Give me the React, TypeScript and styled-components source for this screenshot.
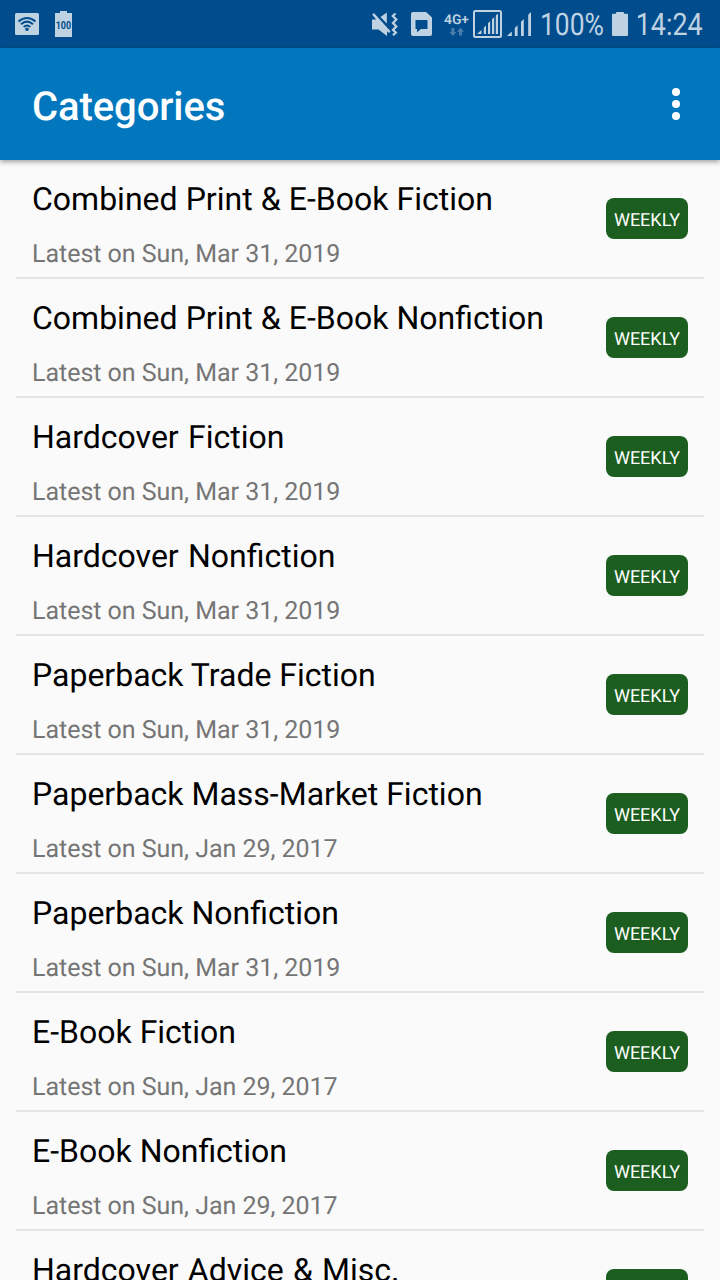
import React from 'react';
import styled, { createGlobalStyle } from 'styled-components';

const GlobalStyle = createGlobalStyle`
  * { box-sizing: border-box; }
  html, body { margin: 0; padding: 0; background: #fafafa; }
  body {
    font-family: Roboto, "Liberation Sans", sans-serif;
    text-rendering: geometricPrecision;
    overflow: hidden;
  }
`;

const Screen = styled.div`
  display: flex;
  flex-direction: column;
  width: 720px;
  height: 1280px;
  overflow: hidden;
  background: #fafafa;
`;

const StatusBar = styled.div`
  display: flex;
  justify-content: space-between;
  flex: none;
  height: 48px;
  padding: 0 16px 0 14px;
  background: #004c8c;
`;

const StatusGroup = styled.div`
  display: flex;
  height: 48px;
`;

const StatusIcon = styled.svg<{ $gap?: number }>`
  display: block;
  flex: none;
  height: 48px;
  margin-left: ${({ $gap = 0 }) => $gap}px;
  overflow: visible;
  fill: #bfd2e2;
  font-family: Roboto, sans-serif;
`;

const AppBar = styled.header`
  position: relative;
  display: flex;
  align-items: center;
  justify-content: space-between;
  flex: none;
  height: 112px;
  padding: 0 32px;
  background: #0277bd;
  box-shadow: 0 2px 5px rgba(0, 0, 0, 0.36);
`;

const Title = styled.h1`
  margin: 6px 0 0;
  font-size: 40px;
  line-height: 48px;
  font-weight: 500;
  letter-spacing: -0.08px;
  color: #fff;
`;

const MenuButton = styled.button`
  display: flex;
  flex-direction: column;
  gap: 4px;
  margin: 0 8px 0 0;
  padding: 0;
  border: 0;
  background: none;
`;

const Dot = styled.span`
  width: 8px;
  height: 8px;
  border-radius: 50%;
  background: #fff;
`;

const List = styled.ul`
  flex: none;
  margin: 0 16px;
  padding: 0;
  list-style: none;
`;

const Row = styled.li`
  display: flex;
  align-items: center;
  justify-content: space-between;
  height: 119px;
  padding: 0 16px;
  border-bottom: 2px solid #e4e4e4;
`;

const RowText = styled.div`
  display: flex;
  flex-direction: column;
  gap: 22px;
  height: 117px;
  padding-top: 20px;
  white-space: nowrap;
`;

const Name = styled.div<{ $wordGap?: number }>`
  font-size: 32px;
  line-height: 38px;
  word-spacing: ${({ $wordGap = 0 }) => $wordGap}px;
  color: #000;
`;

const Latest = styled.div`
  font-size: 25px;
  line-height: 30px;
  letter-spacing: -0.03px;
  color: #757575;
`;

const Badge = styled.span`
  display: flex;
  align-items: center;
  justify-content: center;
  width: 82px;
  height: 41px;
  padding-top: 4px;
  border-radius: 8px;
  background: #1b5e20;
  color: #fff;
  font-size: 18px;
  line-height: 21px;
`;

interface Category {
  name: string;
  latest: string;
  wordGap?: number;
}

const categories: Category[] = [
  { name: 'Combined Print & E-Book Fiction', latest: 'Sun, Mar 31, 2019', wordGap: 0.15 },
  { name: 'Combined Print & E-Book Nonfiction', latest: 'Sun, Mar 31, 2019', wordGap: 0.15 },
  { name: 'Hardcover Fiction', latest: 'Sun, Mar 31, 2019', wordGap: 1.3 },
  { name: 'Hardcover Nonfiction', latest: 'Sun, Mar 31, 2019', wordGap: 1.3 },
  { name: 'Paperback Trade Fiction', latest: 'Sun, Mar 31, 2019' },
  { name: 'Paperback Mass-Market Fiction', latest: 'Sun, Jan 29, 2017' },
  { name: 'Paperback Nonfiction', latest: 'Sun, Mar 31, 2019' },
  { name: 'E-Book Fiction', latest: 'Sun, Jan 29, 2017' },
  { name: 'E-Book Nonfiction', latest: 'Sun, Jan 29, 2017' },
  { name: 'Hardcover Advice & Misc.', latest: 'Sun, Mar 31, 2019', wordGap: 1.2 },
];

const WifiIcon = () => (
  <StatusIcon width="26" viewBox="0 0 26 48">
    <rect x="1" y="13" width="24" height="22" rx="1.5" />
    <g fill="none" stroke="#004c8c" strokeWidth="2">
      <path d="M4.5 21.5Q13 14.5 21.5 21.5" />
      <path d="M7 24.3Q13 19 19 24.3" />
      <path d="M9.7 27Q13 24 16.3 27" />
    </g>
    <circle cx="13" cy="29.2" r="1.7" fill="#004c8c" />
  </StatusIcon>
);

const BatteryLevelIcon = () => (
  <StatusIcon width="18" viewBox="0 0 18 48" $gap={14}>
    <path d="M1 13H6V11H13V13H18V37H1Z" />
    <text x="1.7" y="29.2" fontSize="11" fontWeight="700" fill="#004c8c" textLength="15.4" lengthAdjust="spacingAndGlyphs">100</text>
  </StatusIcon>
);

const MuteIcon = () => (
  <StatusIcon width="28" viewBox="0 0 28 48">
    <path d="M1 19.5H5.2L1.2 14.8L2.9 13L19.5 31.3L18 33L16 31.3V36L7.5 29.5H1Z" />
    <path d="M9.5 17L15.8 12.5V23.5Z" />
    <path d="M24.5 13.5L21.8 16L25.3 19.5L22 23L25.3 26.5L22 30L24.8 32.5L22 35.3" fill="none" stroke="#bfd2e2" strokeWidth="2.3" />
  </StatusIcon>
);

const CardIcon = () => (
  <StatusIcon width="22" viewBox="0 0 22 48" $gap={12}>
    <path fillRule="evenodd" d="M2 12H15L21 17.5V34Q21 36 19 36H2Q0 36 0 34V14Q0 12 2 12ZM4.5 20V29H6V32.3L10 29H16.5V20Z" />
  </StatusIcon>
);

const NetworkIcon = () => (
  <StatusIcon width="26" viewBox="0 0 26 48" $gap={11}>
    <text x="0" y="23.5" fontSize="13.5" fontWeight="600" textLength="25" lengthAdjust="spacingAndGlyphs">4G+</text>
    <path d="M7.5 28H10.3V32H12.3L8.9 36L5.5 32H7.5ZM15.1 35.5H17.9V31.7H20L16.5 27.5L13 31.7H15.1Z" fill="#4c80ad" />
  </StatusIcon>
);

const BoxedSignalIcon = () => (
  <StatusIcon width="30" viewBox="0 0 30 48" $gap={3}>
    <rect x="1" y="11" width="27" height="26" rx="1.5" fill="none" stroke="#bfd2e2" strokeWidth="2" />
    <path d="M4 34L8.5 30V34ZM10.8 34V27.8L13 25.5V34ZM15 34V23.2L17.2 21V34ZM19 34V19.2L21.2 17V34ZM22.8 34V15.5L25 13.5V34Z" />
  </StatusIcon>
);

const SignalIcon = () => (
  <StatusIcon width="25" viewBox="0 0 25 48" $gap={4}>
    <path d="M0 36L4.8 31.4V36ZM7.8 36V28L10.6 25.2V36ZM14 36V21.8L16.8 19V36ZM21.2 36V14.8L24 12V36Z" />
  </StatusIcon>
);

const BatteryIcon = () => (
  <StatusIcon width="17" viewBox="0 0 17 48" $gap={7}>
    <path d="M1 13.7H4V13Q4 12 5 12H11Q12 12 12 13V13.7H15Q16 13.7 16 14.7V35Q16 36 15 36H1Q0 36 0 35V14.7Q0 13.7 1 13.7Z" />
  </StatusIcon>
);

export default function App() {
  return (
    <Screen>
      <GlobalStyle />
      <StatusBar>
        <StatusGroup>
          <WifiIcon />
          <BatteryLevelIcon />
        </StatusGroup>
        <StatusGroup>
          <MuteIcon />
          <CardIcon />
          <NetworkIcon />
          <BoxedSignalIcon />
          <SignalIcon />
          <StatusIcon width="65" viewBox="0 0 65 48" $gap={8}>
            <text x="0" y="35" fontSize="31" textLength="64" lengthAdjust="spacingAndGlyphs">100%</text>
          </StatusIcon>
          <BatteryIcon />
          <StatusIcon width="69" viewBox="0 0 69 48" $gap={6}>
            <text x="0.7" y="35" fontSize="31" textLength="67" lengthAdjust="spacingAndGlyphs">14:24</text>
          </StatusIcon>
        </StatusGroup>
      </StatusBar>
      <AppBar>
        <Title>Categories</Title>
        <MenuButton aria-label="More options">
          <Dot />
          <Dot />
          <Dot />
        </MenuButton>
      </AppBar>
      <List>
        {categories.map(({ name, latest, wordGap }) => (
          <Row key={name}>
            <RowText>
              <Name $wordGap={wordGap}>{name}</Name>
              <Latest>Latest on {latest}</Latest>
            </RowText>
            <Badge>WEEKLY</Badge>
          </Row>
        ))}
      </List>
    </Screen>
  );
}
